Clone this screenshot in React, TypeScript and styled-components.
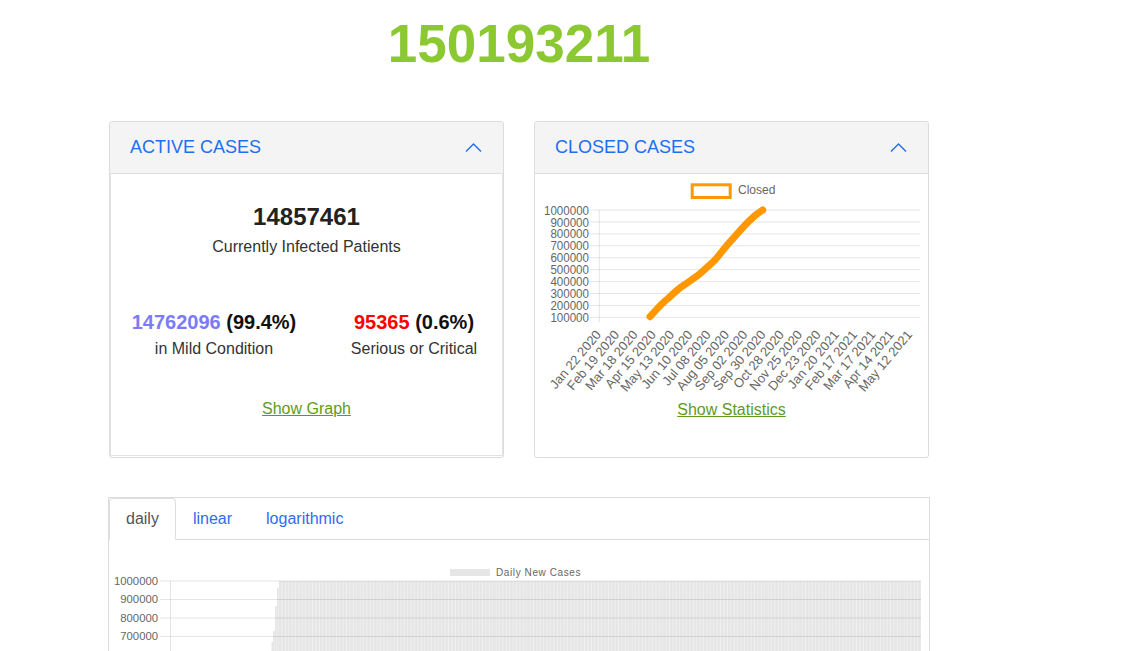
import React from "react";
import styled, { createGlobalStyle } from "styled-components";

const GlobalStyle = createGlobalStyle`
  html, body { margin: 0; padding: 0; background: #fff; overflow: hidden; }
  body { font-family: "Liberation Sans", Arial, sans-serif; color: #333; }
`;

const Page = styled.main`
  width: 822px;
  margin-left: 108px;
  padding-top: 12px;
`;

const Title = styled.h1`
  margin: 0;
  text-align: center;
  font-size: 53px;
  line-height: 63px;
  font-weight: 700;
  color: #8cc832;
`;

const CardsRow = styled.section`
  margin-top: 46px;
  padding: 0 1px;
  display: grid;
  grid-template-columns: 1fr 1fr;
  gap: 30px;
`;

const Card = styled.div`
  height: 337px;
  box-sizing: border-box;
  border: 1px solid #dcdcdc;
  border-radius: 3px;
  overflow: hidden;
  display: flex;
  flex-direction: column;
`;

const CardHeader = styled.header`
  height: 51px;
  flex: none;
  background: #f4f4f4;
  border-bottom: 1px solid #dedede;
  padding: 0 21px 0 20px;
  display: flex;
  align-items: center;
  justify-content: space-between;
`;

const CardTitle = styled.h2`
  margin: 0;
  font-size: 18px;
  font-weight: 400;
  color: #1e6ef0;
`;

const CardBody = styled.div<{ $framed?: boolean }>`
  flex: 1;
  box-sizing: border-box;
  ${(p) =>
    p.$framed
      ? `border: 1px solid #e3e3e3; border-top: none; margin-bottom: 1px;`
      : ``}
`;

const BigNumber = styled.div`
  margin-top: 29px;
  text-align: center;
  font-size: 24px;
  line-height: 28px;
  font-weight: 700;
  color: #222;
`;

const Caption = styled.div`
  margin-top: 4px;
  text-align: center;
  font-size: 16px;
  line-height: 24px;
  color: #333;
`;

const SplitRow = styled.div`
  margin-top: 51px;
  padding-left: 15px;
  display: grid;
  grid-template-columns: 200px 200px;
  justify-content: center;
`;

const Stat = styled.div`
  text-align: center;
`;

const StatValue = styled.div`
  font-size: 20px;
  line-height: 24px;
  font-weight: 700;
  color: #111;
`;

const Accent = styled.span<{ $color: string }>`
  color: ${(p) => p.$color};
`;

const StatLabel = styled.div`
  margin-top: 3px;
  font-size: 16px;
  line-height: 24px;
  color: #333;
`;

const LinkRow = styled.div<{ $gap: number }>`
  margin-top: ${(p) => p.$gap}px;
  text-align: center;
  font-size: 16px;
  line-height: 24px;
`;

const ToggleLink = styled.a`
  color: #5f9b1b;
  text-decoration: underline;
  cursor: pointer;
`;

const ChartSvg = styled.svg`
  display: block;
  font-family: "Liberation Sans", Arial, sans-serif;
`;

const TabsBox = styled.section`
  margin-top: 39px;
  border: 1px solid #dcdcdc;
  border-bottom: none;
`;

const TabList = styled.nav`
  display: flex;
  border-bottom: 1px solid #dedede;
`;

const Tab = styled.button<{ $active?: boolean }>`
  font-family: inherit;
  font-size: 16px;
  line-height: 24px;
  padding: 8px 16px;
  margin: 0 0 -1px 0;
  background: ${(p) => (p.$active ? "#fff" : "transparent")};
  background-clip: padding-box;
  border: 1px solid transparent;
  border-radius: 4px 4px 0 0;
  cursor: pointer;
  color: ${(p) => (p.$active ? "#555" : "#2f6cf2")};
  ${(p) => (p.$active ? "border-color: #dedede #dedede #fff;" : "")}
`;

const TabPanel = styled.div``;

const Chevron = () => (
  <svg width="17" height="11" viewBox="0 0 17 11">
    <polyline points="1,9.5 8.5,2 16,9.5" fill="none" stroke="#1e6ef0" strokeWidth="1.4" />
  </svg>
);

const dateLabels = [
  "Jan 22 2020", "Feb 19 2020", "Mar 18 2020", "Apr 15 2020", "May 13 2020",
  "Jun 10 2020", "Jul 08 2020", "Aug 05 2020", "Sep 02 2020", "Sep 30 2020",
  "Oct 28 2020", "Nov 25 2020", "Dec 23 2020", "Jan 20 2021", "Feb 17 2021",
  "Mar 17 2021", "Apr 14 2021", "May 12 2021",
];

const yValues = [1000000, 900000, 800000, 700000, 600000, 500000, 400000, 300000, 200000, 100000];

const ClosedChart = () => (
  <ChartSvg width="393" height="222" viewBox="0 0 393 222">
    <rect x="157.2" y="10.8" width="38" height="12.7" fill="#fff" stroke="#ff9800" strokeWidth="3" />
    <text x="203" y="20.3" fontSize="12" fill="#666">Closed</text>
    {yValues.map((v, i) => {
      const y = 36 + i * 11.93;
      return (
        <g key={v}>
          <line x1="55" x2="385" y1={y} y2={y} stroke="rgba(0,0,0,0.1)" strokeWidth="1" />
          <text
            x="54"
            y={y + 4.6}
            fontSize="13.5"
            fill="#666"
            textAnchor="end"
            textLength={String(v).length === 7 ? 45 : 38.6}
            lengthAdjust="spacingAndGlyphs"
          >
            {v}
          </text>
        </g>
      );
    })}
    <line x1="64.3" x2="64.3" y1="36" y2="148" stroke="rgba(0,0,0,0.1)" strokeWidth="1" />
    <path
      d="M115 142.7 C121 136 127 129 133.3 124.3 C138 120 142 116 146.7 112.7 C152 109 158 105 163.3 101 C169 96 175 91 180 86 C186 79 191 72 196.7 66 C202 60 208 53 213.3 47.7 C218 43 223 39 227.7 36"
      fill="none"
      stroke="#ff9800"
      strokeWidth="7"
      strokeLinecap="round"
      strokeLinejoin="round"
    />
    {dateLabels.map((d, i) => {
      const x = 66.7 + i * 18.3;
      const y = 161;
      return (
        <text
          key={d}
          x={x}
          y={y}
          fontSize="13"
          fill="#666"
          textAnchor="end"
          transform={`rotate(-50 ${x} ${y})`}
        >
          {d}
        </text>
      );
    })}
  </ChartSvg>
);

const dailyY = [1000000, 900000, 800000, 700000, 600000, 500000, 400000, 300000];

const rampBars = [
  { x: 162.5, top: 102 },
  { x: 164, top: 91 },
  { x: 166, top: 66 },
  { x: 168, top: 48 },
];

const DailyChart = () => (
  <ChartSvg width="820" height="111" viewBox="0 0 820 111">
    <defs>
      <pattern id="barStripes" x="0" y="0" width="3.4" height="10" patternUnits="userSpaceOnUse">
        <rect x="0" y="0" width="3.4" height="10" fill="#f0f0f0" />
        <rect x="0" y="0" width="2.4" height="10" fill="#e6e6e6" />
      </pattern>
    </defs>
    <rect x="341" y="29" width="40" height="7" fill="#e6e6e6" />
    <text x="387" y="36" fontSize="10" fill="#666" letterSpacing="0.6">Daily New Cases</text>
    {rampBars.map((b) => (
      <rect key={b.x} x={b.x} y={b.top} width="1.8" height={111 - b.top} fill="#e6e6e6" />
    ))}
    <rect x="170" y="41" width="642" height="70" fill="url(#barStripes)" />
    {dailyY.map((v, i) => {
      const y = 41 + i * 18.5;
      return (
        <g key={v}>
          <line x1="51" x2="812" y1={y} y2={y} stroke="rgba(0,0,0,0.1)" strokeWidth="1" />
          <text
            x="49"
            y={y + 3.6}
            fontSize="10"
            fill="#666"
            textAnchor="end"
            textLength={String(v).length === 7 ? 44 : 37.7}
            lengthAdjust="spacingAndGlyphs"
          >
            {v}
          </text>
        </g>
      );
    })}
    <line x1="61.5" x2="61.5" y1="41" y2="111" stroke="rgba(0,0,0,0.1)" strokeWidth="1" />
  </ChartSvg>
);

export default function App() {
  return (
    <>
      <GlobalStyle />
      <Page>
        <Title>150193211</Title>
        <CardsRow>
          <Card>
            <CardHeader>
              <CardTitle>ACTIVE CASES</CardTitle>
              <Chevron />
            </CardHeader>
            <CardBody $framed>
              <BigNumber>14857461</BigNumber>
              <Caption>Currently Infected Patients</Caption>
              <SplitRow>
                <Stat>
                  <StatValue>
                    <Accent $color="#7b7bf8">14762096</Accent> (99.4%)
                  </StatValue>
                  <StatLabel>in Mild Condition</StatLabel>
                </Stat>
                <Stat>
                  <StatValue>
                    <Accent $color="#ff0000">95365</Accent> (0.6%)
                  </StatValue>
                  <StatLabel>Serious or Critical</StatLabel>
                </Stat>
              </SplitRow>
              <LinkRow $gap={36}>
                <ToggleLink>Show Graph</ToggleLink>
              </LinkRow>
            </CardBody>
          </Card>
          <Card>
            <CardHeader>
              <CardTitle>CLOSED CASES</CardTitle>
              <Chevron />
            </CardHeader>
            <CardBody>
              <ClosedChart />
              <LinkRow $gap={2}>
                <ToggleLink>Show Statistics</ToggleLink>
              </LinkRow>
            </CardBody>
          </Card>
        </CardsRow>
        <TabsBox>
          <TabList>
            <Tab $active>daily</Tab>
            <Tab>linear</Tab>
            <Tab>logarithmic</Tab>
          </TabList>
          <TabPanel>
            <DailyChart />
          </TabPanel>
        </TabsBox>
      </Page>
    </>
  );
}
